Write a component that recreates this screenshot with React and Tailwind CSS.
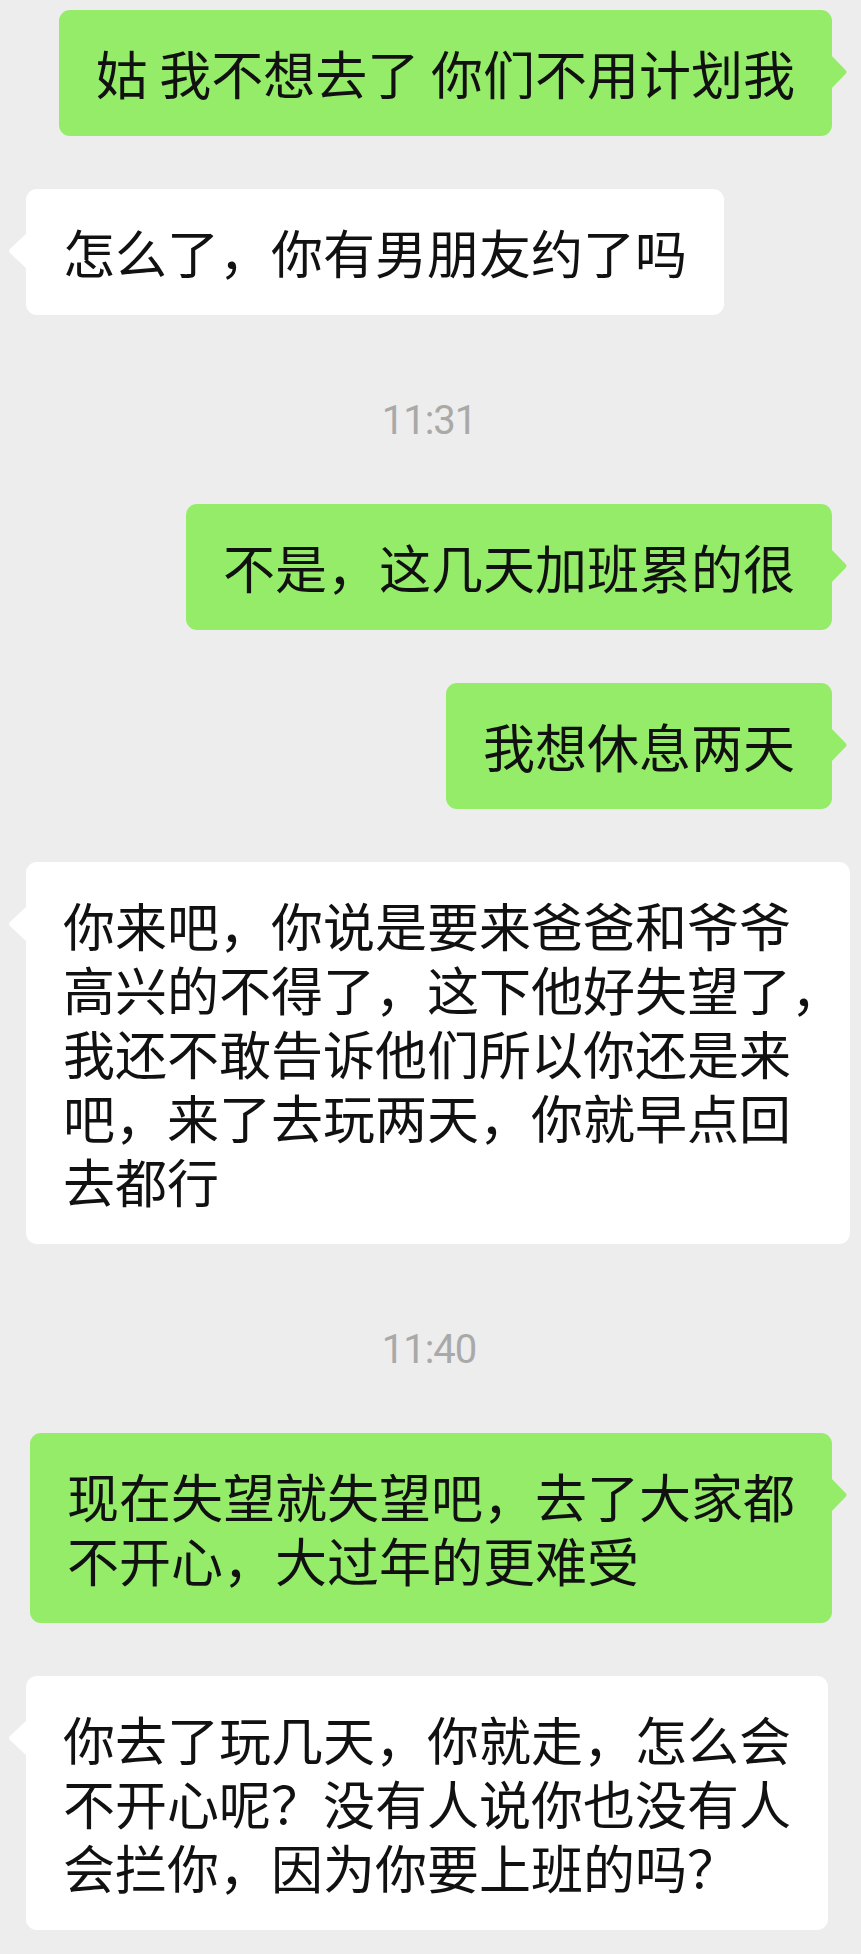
import React from 'react';

const messages = [
  { type: 'me', lines: ['姑 我不想去了 你们不用计划我'] },
  { type: 'other', lines: ['怎么了，你有男朋友约了吗'] },
  { type: 'time', text: '11:31' },
  { type: 'me', lines: ['不是，这几天加班累的很'] },
  { type: 'me', lines: ['我想休息两天'] },
  {
    type: 'other',
    wide: true,
    lines: [
      '你来吧，你说是要来爸爸和爷爷',
      '高兴的不得了，这下他好失望了，',
      '我还不敢告诉他们所以你还是来',
      '吧，来了去玩两天，你就早点回',
      '去都行',
    ],
  },
  { type: 'time', text: '11:40' },
  { type: 'me', lines: ['现在失望就失望吧，去了大家都', '不开心，大过年的更难受'] },
  {
    type: 'other',
    lines: ['你去了玩几天，你就走，怎么会', '不开心呢？没有人说你也没有人', '会拦你，因为你要上班的吗？'],
  },
];

function Tail({ side }) {
  if (side === 'right') {
    return (
      <svg className="absolute top-[45px] right-[-16px]" width="17" height="34" viewBox="0 0 17 34">
        <path d="M0 0 L14.5 15 Q16.5 17 14.5 19 L0 34 Z" fill="#95ec69" />
      </svg>
    );
  }
  return (
    <svg className="absolute top-[44px] left-[-18px]" width="19" height="36" viewBox="0 0 19 36">
      <path d="M19 0 L2 16 Q0 18 2 20 L19 36 Z" fill="#ffffff" />
    </svg>
  );
}

function Bubble({ msg }) {
  const mine = msg.type === 'me';
  return (
    <div className={`flex ${mine ? 'justify-end' : 'justify-start'}`}>
      <div
        className={`relative rounded-[11px] px-[37px] py-[31px] text-[52px] leading-[64px] text-[#111111] ${
          mine ? 'bg-[#95ec69]' : 'bg-white'
        } ${msg.wide ? 'w-[824px]' : ''}`}
      >
        <Tail side={mine ? 'right' : 'left'} />
        {msg.lines.map((line, i) => (
          <div key={i} className="whitespace-pre">
            {line}
          </div>
        ))}
      </div>
    </div>
  );
}

export default function App() {
  return (
    <div
      className="min-h-screen w-full bg-[#ededed] pt-[10px] pb-[20px] pl-[26px] pr-[29px] flex flex-col gap-[53px]"
      style={{ fontFamily: '"Noto Sans CJK SC", "Noto Sans", sans-serif' }}
    >
      {messages.map((msg, i) =>
        msg.type === 'time' ? (
          <div
            key={i}
            className="mt-[33px] mb-[10px] h-[40px] flex items-center justify-center text-[40px] leading-[40px] text-[#a9a9a9] tracking-[-1px] font-['Roboto',sans-serif] font-normal"
          >
            {msg.text}
          </div>
        ) : (
          <Bubble key={i} msg={msg} />
        )
      )}
    </div>
  );
}
